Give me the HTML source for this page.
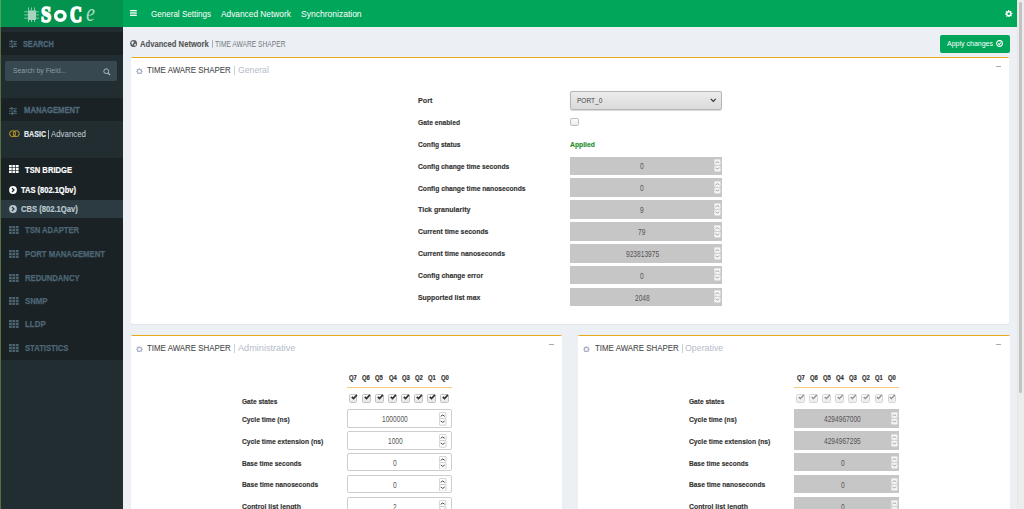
<!DOCTYPE html>
<html><head><meta charset="utf-8"><style>
html,body{margin:0;padding:0;width:1024px;height:509px;overflow:hidden;background:#ecf0f5;font-family:"Liberation Sans",sans-serif;}
body>div,body>span,body>svg{position:absolute;display:block;}
.t{white-space:nowrap;transform-origin:0 0;}
</style></head><body>
<div style="left:0.00px;top:0.00px;width:1024.00px;height:509.00px;background:#ecf0f5"></div>
<div style="left:0.00px;top:0.00px;width:123.00px;height:27.00px;background:#03934e"></div>
<div style="left:123.00px;top:0.00px;width:894.00px;height:27.00px;background:#00a65a"></div>
<div style="left:0.00px;top:27.00px;width:123.00px;height:482.00px;background:#222d32"></div>
<div style="left:0.00px;top:32.00px;width:123.00px;height:23.00px;background:#1a2226"></div>
<div style="left:0.00px;top:98.00px;width:123.00px;height:23.00px;background:#1a2226"></div>
<div style="left:0.00px;top:158.00px;width:123.00px;height:202.00px;background:#1a2226"></div>
<div style="left:0.00px;top:200.00px;width:123.00px;height:18.00px;background:#2c3b41"></div>
<div style="left:0.00px;top:0.00px;width:1.00px;height:27.00px;background:#4fa55e"></div>
<div style="left:0.00px;top:27.00px;width:1.00px;height:482.00px;background:#56703f"></div>
<div style="left:1017.00px;top:0.00px;width:7.00px;height:509.00px;background:#ececec;box-shadow:inset 0.5px 0 0 #e0e0e0"></div>
<div style="left:1019.30px;top:2.00px;width:3.00px;height:391.00px;background:#c3c3c3;border-radius:1.5px"></div>
<svg style="left:24px;top:6.5px" width="16" height="16" viewBox="0 0 16 16"><g fill="#a6d5bd"><rect x="3.9" y="3.4" width="8.1" height="9.6" /><rect x="4.1" y="0.4" width="0.8" height="3"/><rect x="7" y="0.4" width="0.8" height="3"/><rect x="10.2" y="0.4" width="0.8" height="3"/><rect x="4.1" y="13" width="0.8" height="2"/><rect x="7" y="13" width="0.8" height="2"/><rect x="10.2" y="13" width="0.8" height="2"/><rect x="0.2" y="4.4" width="3.7" height="0.8"/><rect x="0.2" y="7.5" width="3.7" height="0.8"/><rect x="0.2" y="10.7" width="3.7" height="0.8"/><rect x="12" y="4.4" width="2.9" height="0.8"/><rect x="12" y="7.5" width="2.9" height="0.8"/><rect x="12" y="10.7" width="2.9" height="0.8"/></g></svg>
<span class="t" style="left:40.75px;top:0.61px;font-family:'Liberation Serif',serif;font-size:22.5px;line-height:27px;color:#fff;-webkit-text-stroke:1.6px #fff;font-weight:700;transform:scaleX(0.816)">S</span>
<svg style="left:54px;top:10px" width="13" height="12" viewBox="0 0 13 12"><ellipse cx="6.35" cy="5.85" rx="4.7" ry="4.3" fill="none" stroke="#fff" stroke-width="3.5"/></svg>
<span class="t" style="left:70.38px;top:0.61px;font-family:'Liberation Serif',serif;font-size:22.5px;line-height:27px;color:#fff;-webkit-text-stroke:1.7px #fff;font-weight:700;transform:scaleX(0.737)">C</span>
<span class="t" style="left:86.00px;top:-2.57px;font-family:'Liberation Serif',serif;font-size:26px;line-height:31px;color:#a3dcc0;font-style:italic;transform:scaleX(0.778)">e</span>
<svg style="left:130.4px;top:10.3px" width="7" height="6" viewBox="0 0 7 6"><g fill="#fff"><rect x="0" y="0" width="6.8" height="1.3"/><rect x="0" y="2.3" width="6.8" height="1.3"/><rect x="0" y="4.6" width="6.8" height="1.3"/></g></svg>
<span class="t" style="left:150.50px;top:8.58px;font-size:8.72px;line-height:11px;font-weight:400;color:#fff;transform:scaleX(0.924);">General Settings</span>
<span class="t" style="left:220.60px;top:8.58px;font-size:8.72px;line-height:11px;font-weight:400;color:#fff;transform:scaleX(0.955);">Advanced Network</span>
<span class="t" style="left:300.60px;top:8.58px;font-size:8.72px;line-height:11px;font-weight:400;color:#fff;transform:scaleX(0.977);">Synchronization</span>
<svg style="left:1005px;top:9.5px" width="7.6" height="7.6" viewBox="0 0 7.6 7.6"><polygon points="7.53,3.06 7.60,3.80 6.48,4.33 6.33,4.85 6.96,5.91 6.49,6.49 5.32,6.07 4.85,6.33 4.54,7.53 3.80,7.60 3.27,6.48 2.75,6.33 1.69,6.96 1.11,6.49 1.53,5.32 1.27,4.85 0.07,4.54 0.00,3.80 1.12,3.27 1.27,2.75 0.64,1.69 1.11,1.11 2.28,1.53 2.75,1.27 3.06,0.07 3.80,0.00 4.33,1.12 4.85,1.27 5.91,0.64 6.49,1.11 6.07,2.28 6.33,2.75" fill="#fff"/><circle cx="3.8" cy="3.8" r="1.29" fill="#00a65a"/></svg>
<svg style="left:9px;top:40px" width="9" height="8" viewBox="0 0 9 8"><g fill="#4b646f"><rect x="0" y="1" width="8" height="0.9"/><rect x="0" y="3.6" width="8" height="0.9"/><rect x="0" y="6.1" width="8" height="0.9"/><rect x="1.8" y="0" width="1.6" height="2.9"/><rect x="5.1" y="2.6" width="1.6" height="2.9"/><rect x="2.6" y="5.1" width="1.6" height="2.9"/></g></svg>
<span class="t" style="left:23.30px;top:37.67px;font-size:9.59px;line-height:12px;font-weight:700;color:#50697a;transform:scaleX(0.763);-webkit-text-stroke:0.3px #50697a;">SEARCH</span>
<div style="left:5.00px;top:60.70px;width:112.00px;height:19.90px;background:#374850;border-radius:2px"></div>
<span class="t" style="left:12.90px;top:66.38px;font-size:7.85px;line-height:10px;font-weight:400;color:#8d9da5;transform:scaleX(0.871);">Search by Field...</span>
<svg style="left:102.5px;top:67.8px" width="8" height="8" viewBox="0 0 8 8"><circle cx="3.2" cy="3.2" r="2.4" fill="none" stroke="#b3c0c6" stroke-width="0.9"/><line x1="5" y1="5" x2="7.1" y2="7.1" stroke="#b3c0c6" stroke-width="1.1"/></svg>
<svg style="left:9px;top:106.5px" width="9" height="8" viewBox="0 0 9 8"><g fill="#4b646f"><rect x="0" y="1" width="8" height="0.9"/><rect x="0" y="3.6" width="8" height="0.9"/><rect x="0" y="6.1" width="8" height="0.9"/><rect x="1.8" y="0" width="1.6" height="2.9"/><rect x="5.1" y="2.6" width="1.6" height="2.9"/><rect x="2.6" y="5.1" width="1.6" height="2.9"/></g></svg>
<span class="t" style="left:23.90px;top:103.77px;font-size:9.30px;line-height:12px;font-weight:700;color:#50697a;transform:scaleX(0.824);-webkit-text-stroke:0.3px #50697a;">MANAGEMENT</span>
<svg style="left:9px;top:129.8px" width="11" height="7.5" viewBox="0 0 11 7.5"><g fill="none" stroke="#c9a125" stroke-width="1.0"><ellipse cx="3.6" cy="3.7" rx="3.0" ry="3.0"/><ellipse cx="7.3" cy="3.7" rx="3.0" ry="3.0"/></g></svg>
<span class="t" style="left:23.60px;top:126.82px;font-size:9.74px;line-height:13px;font-weight:700;color:#e6ecef;transform:scaleX(0.726);-webkit-text-stroke:0.2px #e6ecef;">BASIC</span>
<div style="left:47.90px;top:129.50px;width:0.70px;height:9.00px;background:#9fb0b8"></div>
<span class="t" style="left:51.00px;top:126.82px;font-size:9.74px;line-height:13px;font-weight:400;color:#c5d1d7;transform:scaleX(0.808);">Advanced</span>
<svg style="left:9.2px;top:164.8px" width="10.2" height="8.3" viewBox="0 0 10.2 8.3"><g fill="#fff"><rect x="0.00" y="0.00" width="2.75" height="2.25"/><rect x="3.45" y="0.00" width="2.75" height="2.25"/><rect x="6.90" y="0.00" width="2.75" height="2.25"/><rect x="0.00" y="2.85" width="2.75" height="2.25"/><rect x="3.45" y="2.85" width="2.75" height="2.25"/><rect x="6.90" y="2.85" width="2.75" height="2.25"/><rect x="0.00" y="5.70" width="2.75" height="2.25"/><rect x="3.45" y="5.70" width="2.75" height="2.25"/><rect x="6.90" y="5.70" width="2.75" height="2.25"/></g></svg>
<span class="t" style="left:24.80px;top:163.52px;font-size:9.45px;line-height:12px;font-weight:700;color:#fff;transform:scaleX(0.808);-webkit-text-stroke:0.2px #fff;">TSN BRIDGE</span>
<svg style="left:9.3px;top:186.3px" width="8" height="8" viewBox="0 0 8 8"><circle cx="4" cy="4" r="3.9" fill="#fff"/><polyline points="3,2 5,4 3,6" fill="none" stroke="#1a2226" stroke-width="1.2"/></svg>
<span class="t" style="left:21.00px;top:184.58px;font-size:8.43px;line-height:11px;font-weight:700;color:#fff;transform:scaleX(0.892);-webkit-text-stroke:0.2px #fff;">TAS (802.1Qbv)</span>
<svg style="left:9.3px;top:205.3px" width="8" height="8" viewBox="0 0 8 8"><circle cx="4" cy="4" r="3.9" fill="#b8c7ce"/><polyline points="3,2 5,4 3,6" fill="none" stroke="#2c3b41" stroke-width="1.2"/></svg>
<span class="t" style="left:20.60px;top:203.58px;font-size:8.43px;line-height:11px;font-weight:700;color:#b8c7ce;transform:scaleX(0.905);-webkit-text-stroke:0.2px #b8c7ce;">CBS (802.1Qav)</span>
<svg style="left:9.2px;top:225.9px" width="10.2" height="8.3" viewBox="0 0 10.2 8.3"><g fill="#4b646f"><rect x="0.00" y="0.00" width="2.75" height="2.25"/><rect x="3.45" y="0.00" width="2.75" height="2.25"/><rect x="6.90" y="0.00" width="2.75" height="2.25"/><rect x="0.00" y="2.85" width="2.75" height="2.25"/><rect x="3.45" y="2.85" width="2.75" height="2.25"/><rect x="6.90" y="2.85" width="2.75" height="2.25"/><rect x="0.00" y="5.70" width="2.75" height="2.25"/><rect x="3.45" y="5.70" width="2.75" height="2.25"/><rect x="6.90" y="5.70" width="2.75" height="2.25"/></g></svg>
<span class="t" style="left:24.80px;top:224.02px;font-size:9.45px;line-height:12px;font-weight:700;color:#4e6674;transform:scaleX(0.809);-webkit-text-stroke:0.25px #4e6674;">TSN ADAPTER</span>
<svg style="left:9.2px;top:249.9px" width="10.2" height="8.3" viewBox="0 0 10.2 8.3"><g fill="#4b646f"><rect x="0.00" y="0.00" width="2.75" height="2.25"/><rect x="3.45" y="0.00" width="2.75" height="2.25"/><rect x="6.90" y="0.00" width="2.75" height="2.25"/><rect x="0.00" y="2.85" width="2.75" height="2.25"/><rect x="3.45" y="2.85" width="2.75" height="2.25"/><rect x="6.90" y="2.85" width="2.75" height="2.25"/><rect x="0.00" y="5.70" width="2.75" height="2.25"/><rect x="3.45" y="5.70" width="2.75" height="2.25"/><rect x="6.90" y="5.70" width="2.75" height="2.25"/></g></svg>
<span class="t" style="left:24.80px;top:248.02px;font-size:9.45px;line-height:12px;font-weight:700;color:#4e6674;transform:scaleX(0.821);-webkit-text-stroke:0.25px #4e6674;">PORT MANAGEMENT</span>
<svg style="left:9.2px;top:273.5px" width="10.2" height="8.3" viewBox="0 0 10.2 8.3"><g fill="#4b646f"><rect x="0.00" y="0.00" width="2.75" height="2.25"/><rect x="3.45" y="0.00" width="2.75" height="2.25"/><rect x="6.90" y="0.00" width="2.75" height="2.25"/><rect x="0.00" y="2.85" width="2.75" height="2.25"/><rect x="3.45" y="2.85" width="2.75" height="2.25"/><rect x="6.90" y="2.85" width="2.75" height="2.25"/><rect x="0.00" y="5.70" width="2.75" height="2.25"/><rect x="3.45" y="5.70" width="2.75" height="2.25"/><rect x="6.90" y="5.70" width="2.75" height="2.25"/></g></svg>
<span class="t" style="left:24.80px;top:271.62px;font-size:9.45px;line-height:12px;font-weight:700;color:#4e6674;transform:scaleX(0.813);-webkit-text-stroke:0.25px #4e6674;">REDUNDANCY</span>
<svg style="left:9.2px;top:297.0px" width="10.2" height="8.3" viewBox="0 0 10.2 8.3"><g fill="#4b646f"><rect x="0.00" y="0.00" width="2.75" height="2.25"/><rect x="3.45" y="0.00" width="2.75" height="2.25"/><rect x="6.90" y="0.00" width="2.75" height="2.25"/><rect x="0.00" y="2.85" width="2.75" height="2.25"/><rect x="3.45" y="2.85" width="2.75" height="2.25"/><rect x="6.90" y="2.85" width="2.75" height="2.25"/><rect x="0.00" y="5.70" width="2.75" height="2.25"/><rect x="3.45" y="5.70" width="2.75" height="2.25"/><rect x="6.90" y="5.70" width="2.75" height="2.25"/></g></svg>
<span class="t" style="left:24.80px;top:295.12px;font-size:9.45px;line-height:12px;font-weight:700;color:#4e6674;transform:scaleX(0.828);-webkit-text-stroke:0.25px #4e6674;">SNMP</span>
<svg style="left:9.2px;top:320.3px" width="10.2" height="8.3" viewBox="0 0 10.2 8.3"><g fill="#4b646f"><rect x="0.00" y="0.00" width="2.75" height="2.25"/><rect x="3.45" y="0.00" width="2.75" height="2.25"/><rect x="6.90" y="0.00" width="2.75" height="2.25"/><rect x="0.00" y="2.85" width="2.75" height="2.25"/><rect x="3.45" y="2.85" width="2.75" height="2.25"/><rect x="6.90" y="2.85" width="2.75" height="2.25"/><rect x="0.00" y="5.70" width="2.75" height="2.25"/><rect x="3.45" y="5.70" width="2.75" height="2.25"/><rect x="6.90" y="5.70" width="2.75" height="2.25"/></g></svg>
<span class="t" style="left:24.80px;top:318.42px;font-size:9.45px;line-height:12px;font-weight:700;color:#4e6674;transform:scaleX(0.839);-webkit-text-stroke:0.25px #4e6674;">LLDP</span>
<svg style="left:9.2px;top:343.8px" width="10.2" height="8.3" viewBox="0 0 10.2 8.3"><g fill="#4b646f"><rect x="0.00" y="0.00" width="2.75" height="2.25"/><rect x="3.45" y="0.00" width="2.75" height="2.25"/><rect x="6.90" y="0.00" width="2.75" height="2.25"/><rect x="0.00" y="2.85" width="2.75" height="2.25"/><rect x="3.45" y="2.85" width="2.75" height="2.25"/><rect x="6.90" y="2.85" width="2.75" height="2.25"/><rect x="0.00" y="5.70" width="2.75" height="2.25"/><rect x="3.45" y="5.70" width="2.75" height="2.25"/><rect x="6.90" y="5.70" width="2.75" height="2.25"/></g></svg>
<span class="t" style="left:24.80px;top:341.92px;font-size:9.45px;line-height:12px;font-weight:700;color:#4e6674;transform:scaleX(0.810);-webkit-text-stroke:0.25px #4e6674;">STATISTICS</span>
<svg style="left:130px;top:40px" width="7.2" height="7.2" viewBox="0 0 8 8"><circle cx="4" cy="4" r="3.9" fill="#5b5e62"/><path d="M2.2 1.6 Q3.6 1.3 4.6 2.2 Q4.4 3.4 3.4 3.6 Q3.8 4.6 3.2 5.4 Q2.2 4.8 1.6 3.6 Q1.2 2.4 2.2 1.6 Z M5.2 4.2 Q6.6 4 6.9 5 Q6.2 6.6 4.8 6.9 Q4.8 5.4 5.2 4.2 Z" fill="#e8ecf0"/></svg>
<span class="t" style="left:140.00px;top:38.88px;font-size:8.72px;line-height:11px;font-weight:700;color:#555;transform:scaleX(0.876);-webkit-text-stroke:0.1px #555;">Advanced Network</span>
<div style="left:212.00px;top:39.70px;width:0.70px;height:8.30px;background:#aab0b8"></div>
<span class="t" style="left:215.40px;top:38.28px;font-size:9.01px;line-height:12px;font-weight:400;color:#747a80;transform:scaleX(0.739);">TIME AWARE SHAPER</span>
<div style="left:939.70px;top:34.60px;width:70.00px;height:18.10px;background:#00a65a;border-radius:2px"></div>
<span class="t" style="left:946.80px;top:38.98px;font-size:7.27px;line-height:9px;font-weight:400;color:#fff;transform:scaleX(0.965);">Apply changes</span>
<svg style="left:996px;top:40px" width="7" height="7" viewBox="0 0 8 8"><circle cx="4" cy="4" r="3.3" fill="none" stroke="#fff" stroke-width="1.2"/><polyline points="2.4,4.0 3.6,5.2 5.7,2.9" fill="none" stroke="#fff" stroke-width="1.25"/></svg>
<div style="left:130.70px;top:56.50px;width:878.80px;height:267.40px;background:#fff;border-top:1.7px solid #e8a916;border-radius:1.5px;box-shadow:0 0.6px 0.6px rgba(0,0,0,0.1);box-sizing:border-box"></div>
<svg style="left:136.1px;top:67.5px" width="6.8" height="6.8" viewBox="0 0 6.8 6.8"><polygon points="6.73,2.74 6.80,3.40 5.80,3.88 5.66,4.34 6.23,5.29 5.80,5.80 4.76,5.44 4.34,5.66 4.06,6.73 3.40,6.80 2.92,5.80 2.46,5.66 1.51,6.23 1.00,5.80 1.36,4.76 1.14,4.34 0.07,4.06 0.00,3.40 1.00,2.92 1.14,2.46 0.57,1.51 1.00,1.00 2.04,1.36 2.46,1.14 2.74,0.07 3.40,0.00 3.88,1.00 4.34,1.14 5.29,0.57 5.80,1.00 5.44,2.04 5.66,2.46" fill="#a4aec2"/><circle cx="3.4" cy="3.4" r="1.43" fill="#fff"/></svg>
<span class="t" style="left:147.20px;top:64.07px;font-size:9.59px;line-height:12px;font-weight:400;color:#4a4a4a;transform:scaleX(0.826);-webkit-text-stroke:0.1px #4a4a4a;">TIME AWARE SHAPER</span>
<div style="left:234.40px;top:66.00px;width:0.80px;height:9.00px;background:#c9d0d8"></div>
<span class="t" style="left:238.00px;top:64.07px;font-size:9.59px;line-height:12px;font-weight:400;color:#b4bcc8;transform:scaleX(0.905);">General</span>
<div style="left:996.00px;top:65.90px;width:5.30px;height:1.00px;background:#a2abb8"></div>
<div style="left:130.70px;top:334.50px;width:431.50px;height:265.50px;background:#fff;border-top:1.7px solid #e8a916;border-radius:1.5px;box-shadow:0 0.6px 0.6px rgba(0,0,0,0.1);box-sizing:border-box"></div>
<svg style="left:136.1px;top:345.5px" width="6.8" height="6.8" viewBox="0 0 6.8 6.8"><polygon points="6.73,2.74 6.80,3.40 5.80,3.88 5.66,4.34 6.23,5.29 5.80,5.80 4.76,5.44 4.34,5.66 4.06,6.73 3.40,6.80 2.92,5.80 2.46,5.66 1.51,6.23 1.00,5.80 1.36,4.76 1.14,4.34 0.07,4.06 0.00,3.40 1.00,2.92 1.14,2.46 0.57,1.51 1.00,1.00 2.04,1.36 2.46,1.14 2.74,0.07 3.40,0.00 3.88,1.00 4.34,1.14 5.29,0.57 5.80,1.00 5.44,2.04 5.66,2.46" fill="#a4aec2"/><circle cx="3.4" cy="3.4" r="1.43" fill="#fff"/></svg>
<span class="t" style="left:147.20px;top:342.07px;font-size:9.59px;line-height:12px;font-weight:400;color:#4a4a4a;transform:scaleX(0.826);-webkit-text-stroke:0.1px #4a4a4a;">TIME AWARE SHAPER</span>
<div style="left:234.40px;top:344.00px;width:0.80px;height:9.00px;background:#c9d0d8"></div>
<span class="t" style="left:238.00px;top:342.07px;font-size:9.59px;line-height:12px;font-weight:400;color:#b4bcc8;transform:scaleX(0.955);">Administrative</span>
<div style="left:548.70px;top:343.90px;width:5.30px;height:1.00px;background:#a2abb8"></div>
<div style="left:578.00px;top:334.50px;width:431.50px;height:265.50px;background:#fff;border-top:1.7px solid #e8a916;border-radius:1.5px;box-shadow:0 0.6px 0.6px rgba(0,0,0,0.1);box-sizing:border-box"></div>
<svg style="left:583.4px;top:345.5px" width="6.8" height="6.8" viewBox="0 0 6.8 6.8"><polygon points="6.73,2.74 6.80,3.40 5.80,3.88 5.66,4.34 6.23,5.29 5.80,5.80 4.76,5.44 4.34,5.66 4.06,6.73 3.40,6.80 2.92,5.80 2.46,5.66 1.51,6.23 1.00,5.80 1.36,4.76 1.14,4.34 0.07,4.06 0.00,3.40 1.00,2.92 1.14,2.46 0.57,1.51 1.00,1.00 2.04,1.36 2.46,1.14 2.74,0.07 3.40,0.00 3.88,1.00 4.34,1.14 5.29,0.57 5.80,1.00 5.44,2.04 5.66,2.46" fill="#a4aec2"/><circle cx="3.4" cy="3.4" r="1.43" fill="#fff"/></svg>
<span class="t" style="left:594.50px;top:342.07px;font-size:9.59px;line-height:12px;font-weight:400;color:#4a4a4a;transform:scaleX(0.826);-webkit-text-stroke:0.1px #4a4a4a;">TIME AWARE SHAPER</span>
<div style="left:681.70px;top:344.00px;width:0.80px;height:9.00px;background:#c9d0d8"></div>
<span class="t" style="left:685.30px;top:342.07px;font-size:9.59px;line-height:12px;font-weight:400;color:#b4bcc8;transform:scaleX(0.921);">Operative</span>
<div style="left:996.00px;top:343.90px;width:5.30px;height:1.00px;background:#a2abb8"></div>
<span class="t" style="left:418.30px;top:96.48px;font-size:7.85px;line-height:10px;font-weight:700;color:#333;transform:scaleX(0.911);-webkit-text-stroke:0.15px #333;">Port</span>
<span class="t" style="left:418.30px;top:118.28px;font-size:7.85px;line-height:10px;font-weight:700;color:#333;transform:scaleX(0.852);-webkit-text-stroke:0.15px #333;">Gate enabled</span>
<span class="t" style="left:418.30px;top:140.08px;font-size:7.85px;line-height:10px;font-weight:700;color:#333;transform:scaleX(0.848);-webkit-text-stroke:0.15px #333;">Config status</span>
<span class="t" style="left:418.30px;top:161.88px;font-size:7.85px;line-height:10px;font-weight:700;color:#333;transform:scaleX(0.855);-webkit-text-stroke:0.15px #333;">Config change time seconds</span>
<span class="t" style="left:418.30px;top:183.68px;font-size:7.85px;line-height:10px;font-weight:700;color:#333;transform:scaleX(0.857);-webkit-text-stroke:0.15px #333;">Config change time nanoseconds</span>
<span class="t" style="left:418.30px;top:205.48px;font-size:7.85px;line-height:10px;font-weight:700;color:#333;transform:scaleX(0.900);-webkit-text-stroke:0.15px #333;">Tick granularity</span>
<span class="t" style="left:418.30px;top:227.28px;font-size:7.85px;line-height:10px;font-weight:700;color:#333;transform:scaleX(0.873);-webkit-text-stroke:0.15px #333;">Current time seconds</span>
<span class="t" style="left:418.30px;top:249.08px;font-size:7.85px;line-height:10px;font-weight:700;color:#333;transform:scaleX(0.875);-webkit-text-stroke:0.15px #333;">Current time nanoseconds</span>
<span class="t" style="left:418.30px;top:270.88px;font-size:7.85px;line-height:10px;font-weight:700;color:#333;transform:scaleX(0.868);-webkit-text-stroke:0.15px #333;">Config change error</span>
<span class="t" style="left:418.30px;top:292.68px;font-size:7.85px;line-height:10px;font-weight:700;color:#333;transform:scaleX(0.883);-webkit-text-stroke:0.15px #333;">Supported list max</span>
<div style="left:570.30px;top:91.10px;width:151.70px;height:18.50px;background:linear-gradient(#ececec,#dadada);border:0.7px solid #b5b5b5;border-radius:2px;box-sizing:border-box;box-shadow:0 0.6px 0.8px rgba(0,0,0,0.15)"></div>
<span class="t" style="left:577.10px;top:95.98px;font-size:7.85px;line-height:10px;font-weight:400;color:#444;transform:scaleX(0.833);">PORT_0</span>
<svg style="left:710px;top:98px" width="6.5" height="4.5" viewBox="0 0 6.5 4.5"><polyline points="0.8,0.8 3.25,3.3 5.7,0.8" fill="none" stroke="#333" stroke-width="1.2"/></svg>
<div style="left:570.30px;top:117.90px;width:8.50px;height:8.30px;background:linear-gradient(#fbfbfb,#ebebeb);border:0.8px solid #bdbdbd;border-radius:1.8px;box-sizing:border-box"></div>
<span class="t" style="left:570.30px;top:139.63px;font-size:7.70px;line-height:10px;font-weight:700;color:#23902a;transform:scaleX(0.882);-webkit-text-stroke:0.15px #23902a;">Applied</span>
<div style="left:570.30px;top:156.60px;width:151.70px;height:18.50px;background:#c6c6c6"></div>
<span class="t" style="left:640.31px;top:161.43px;font-size:8.43px;line-height:11px;font-weight:400;color:#555;transform:scaleX(0.785);">0</span>
<svg style="left:713.7px;top:159.2px" width="7" height="13" viewBox="0 0 7 13"><rect x="0.3" y="0.3" width="6.2" height="5.6" rx="0.8" fill="#f6f6f6" stroke="#d8d8d8" stroke-width="0.5"/><rect x="0.3" y="6.8" width="6.2" height="5.6" rx="0.8" fill="#f6f6f6" stroke="#d8d8d8" stroke-width="0.5"/><polyline points="1.5,3.9 3.4,2.7 5.3,3.9" fill="none" stroke="#9a9a9a" stroke-width="0.9"/><polyline points="1.5,8.8 3.4,10.0 5.3,8.8" fill="none" stroke="#9a9a9a" stroke-width="0.9"/></svg>
<div style="left:570.30px;top:178.45px;width:151.70px;height:18.50px;background:#c6c6c6"></div>
<span class="t" style="left:640.31px;top:183.28px;font-size:8.43px;line-height:11px;font-weight:400;color:#555;transform:scaleX(0.785);">0</span>
<svg style="left:713.7px;top:181.04999999999998px" width="7" height="13" viewBox="0 0 7 13"><rect x="0.3" y="0.3" width="6.2" height="5.6" rx="0.8" fill="#f6f6f6" stroke="#d8d8d8" stroke-width="0.5"/><rect x="0.3" y="6.8" width="6.2" height="5.6" rx="0.8" fill="#f6f6f6" stroke="#d8d8d8" stroke-width="0.5"/><polyline points="1.5,3.9 3.4,2.7 5.3,3.9" fill="none" stroke="#9a9a9a" stroke-width="0.9"/><polyline points="1.5,8.8 3.4,10.0 5.3,8.8" fill="none" stroke="#9a9a9a" stroke-width="0.9"/></svg>
<div style="left:570.30px;top:200.30px;width:151.70px;height:18.50px;background:#c6c6c6"></div>
<span class="t" style="left:640.31px;top:205.13px;font-size:8.43px;line-height:11px;font-weight:400;color:#555;transform:scaleX(0.785);">9</span>
<svg style="left:713.7px;top:202.9px" width="7" height="13" viewBox="0 0 7 13"><rect x="0.3" y="0.3" width="6.2" height="5.6" rx="0.8" fill="#f6f6f6" stroke="#d8d8d8" stroke-width="0.5"/><rect x="0.3" y="6.8" width="6.2" height="5.6" rx="0.8" fill="#f6f6f6" stroke="#d8d8d8" stroke-width="0.5"/><polyline points="1.5,3.9 3.4,2.7 5.3,3.9" fill="none" stroke="#9a9a9a" stroke-width="0.9"/><polyline points="1.5,8.8 3.4,10.0 5.3,8.8" fill="none" stroke="#9a9a9a" stroke-width="0.9"/></svg>
<div style="left:570.30px;top:222.15px;width:151.70px;height:18.50px;background:#c6c6c6"></div>
<span class="t" style="left:638.47px;top:226.98px;font-size:8.43px;line-height:11px;font-weight:400;color:#555;transform:scaleX(0.785);">79</span>
<svg style="left:713.7px;top:224.75px" width="7" height="13" viewBox="0 0 7 13"><rect x="0.3" y="0.3" width="6.2" height="5.6" rx="0.8" fill="#f6f6f6" stroke="#d8d8d8" stroke-width="0.5"/><rect x="0.3" y="6.8" width="6.2" height="5.6" rx="0.8" fill="#f6f6f6" stroke="#d8d8d8" stroke-width="0.5"/><polyline points="1.5,3.9 3.4,2.7 5.3,3.9" fill="none" stroke="#9a9a9a" stroke-width="0.9"/><polyline points="1.5,8.8 3.4,10.0 5.3,8.8" fill="none" stroke="#9a9a9a" stroke-width="0.9"/></svg>
<div style="left:570.30px;top:244.00px;width:151.70px;height:18.50px;background:#c6c6c6"></div>
<span class="t" style="left:625.59px;top:248.83px;font-size:8.43px;line-height:11px;font-weight:400;color:#555;transform:scaleX(0.785);">923813975</span>
<svg style="left:713.7px;top:246.6px" width="7" height="13" viewBox="0 0 7 13"><rect x="0.3" y="0.3" width="6.2" height="5.6" rx="0.8" fill="#f6f6f6" stroke="#d8d8d8" stroke-width="0.5"/><rect x="0.3" y="6.8" width="6.2" height="5.6" rx="0.8" fill="#f6f6f6" stroke="#d8d8d8" stroke-width="0.5"/><polyline points="1.5,3.9 3.4,2.7 5.3,3.9" fill="none" stroke="#9a9a9a" stroke-width="0.9"/><polyline points="1.5,8.8 3.4,10.0 5.3,8.8" fill="none" stroke="#9a9a9a" stroke-width="0.9"/></svg>
<div style="left:570.30px;top:265.85px;width:151.70px;height:18.50px;background:#c6c6c6"></div>
<span class="t" style="left:640.31px;top:270.68px;font-size:8.43px;line-height:11px;font-weight:400;color:#555;transform:scaleX(0.785);">0</span>
<svg style="left:713.7px;top:268.45000000000005px" width="7" height="13" viewBox="0 0 7 13"><rect x="0.3" y="0.3" width="6.2" height="5.6" rx="0.8" fill="#f6f6f6" stroke="#d8d8d8" stroke-width="0.5"/><rect x="0.3" y="6.8" width="6.2" height="5.6" rx="0.8" fill="#f6f6f6" stroke="#d8d8d8" stroke-width="0.5"/><polyline points="1.5,3.9 3.4,2.7 5.3,3.9" fill="none" stroke="#9a9a9a" stroke-width="0.9"/><polyline points="1.5,8.8 3.4,10.0 5.3,8.8" fill="none" stroke="#9a9a9a" stroke-width="0.9"/></svg>
<div style="left:570.30px;top:287.70px;width:151.70px;height:18.50px;background:#c6c6c6"></div>
<span class="t" style="left:634.79px;top:292.53px;font-size:8.43px;line-height:11px;font-weight:400;color:#555;transform:scaleX(0.785);">2048</span>
<svg style="left:713.7px;top:290.30000000000007px" width="7" height="13" viewBox="0 0 7 13"><rect x="0.3" y="0.3" width="6.2" height="5.6" rx="0.8" fill="#f6f6f6" stroke="#d8d8d8" stroke-width="0.5"/><rect x="0.3" y="6.8" width="6.2" height="5.6" rx="0.8" fill="#f6f6f6" stroke="#d8d8d8" stroke-width="0.5"/><polyline points="1.5,3.9 3.4,2.7 5.3,3.9" fill="none" stroke="#9a9a9a" stroke-width="0.9"/><polyline points="1.5,8.8 3.4,10.0 5.3,8.8" fill="none" stroke="#9a9a9a" stroke-width="0.9"/></svg>
<span class="t" style="left:349.20px;top:373.33px;font-size:7.41px;line-height:10px;font-weight:700;color:#333;transform:scaleX(0.799);-webkit-text-stroke:0.2px #333;">Q7</span>
<span class="t" style="left:362.30px;top:373.33px;font-size:7.41px;line-height:10px;font-weight:700;color:#333;transform:scaleX(0.799);-webkit-text-stroke:0.2px #333;">Q6</span>
<span class="t" style="left:375.40px;top:373.33px;font-size:7.41px;line-height:10px;font-weight:700;color:#333;transform:scaleX(0.799);-webkit-text-stroke:0.2px #333;">Q5</span>
<span class="t" style="left:388.50px;top:373.33px;font-size:7.41px;line-height:10px;font-weight:700;color:#333;transform:scaleX(0.799);-webkit-text-stroke:0.2px #333;">Q4</span>
<span class="t" style="left:401.60px;top:373.33px;font-size:7.41px;line-height:10px;font-weight:700;color:#333;transform:scaleX(0.799);-webkit-text-stroke:0.2px #333;">Q3</span>
<span class="t" style="left:414.70px;top:373.33px;font-size:7.41px;line-height:10px;font-weight:700;color:#333;transform:scaleX(0.799);-webkit-text-stroke:0.2px #333;">Q2</span>
<span class="t" style="left:427.80px;top:373.33px;font-size:7.41px;line-height:10px;font-weight:700;color:#333;transform:scaleX(0.799);-webkit-text-stroke:0.2px #333;">Q1</span>
<span class="t" style="left:440.90px;top:373.33px;font-size:7.41px;line-height:10px;font-weight:700;color:#333;transform:scaleX(0.799);-webkit-text-stroke:0.2px #333;">Q0</span>
<div style="left:346.70px;top:386.80px;width:105.10px;height:1.00px;background:#f2cc7a"></div>
<div style="left:348.80px;top:394.00px;width:8.70px;height:9.00px;background:linear-gradient(#fafafa,#e6e6e6);border:0.8px solid #c2c2c2;border-radius:1.6px;box-sizing:border-box"></div>
<svg style="left:350.60px;top:394.4px" width="7" height="6" viewBox="0 0 7 6"><polyline points="0.8,2.9 2.5,4.6 5.9,0.9" fill="none" stroke="#2a2f33" stroke-width="1.6"/></svg>
<div style="left:361.87px;top:394.00px;width:8.70px;height:9.00px;background:linear-gradient(#fafafa,#e6e6e6);border:0.8px solid #c2c2c2;border-radius:1.6px;box-sizing:border-box"></div>
<svg style="left:363.67px;top:394.4px" width="7" height="6" viewBox="0 0 7 6"><polyline points="0.8,2.9 2.5,4.6 5.9,0.9" fill="none" stroke="#2a2f33" stroke-width="1.6"/></svg>
<div style="left:374.94px;top:394.00px;width:8.70px;height:9.00px;background:linear-gradient(#fafafa,#e6e6e6);border:0.8px solid #c2c2c2;border-radius:1.6px;box-sizing:border-box"></div>
<svg style="left:376.74px;top:394.4px" width="7" height="6" viewBox="0 0 7 6"><polyline points="0.8,2.9 2.5,4.6 5.9,0.9" fill="none" stroke="#2a2f33" stroke-width="1.6"/></svg>
<div style="left:388.01px;top:394.00px;width:8.70px;height:9.00px;background:linear-gradient(#fafafa,#e6e6e6);border:0.8px solid #c2c2c2;border-radius:1.6px;box-sizing:border-box"></div>
<svg style="left:389.81px;top:394.4px" width="7" height="6" viewBox="0 0 7 6"><polyline points="0.8,2.9 2.5,4.6 5.9,0.9" fill="none" stroke="#2a2f33" stroke-width="1.6"/></svg>
<div style="left:401.08px;top:394.00px;width:8.70px;height:9.00px;background:linear-gradient(#fafafa,#e6e6e6);border:0.8px solid #c2c2c2;border-radius:1.6px;box-sizing:border-box"></div>
<svg style="left:402.88px;top:394.4px" width="7" height="6" viewBox="0 0 7 6"><polyline points="0.8,2.9 2.5,4.6 5.9,0.9" fill="none" stroke="#2a2f33" stroke-width="1.6"/></svg>
<div style="left:414.15px;top:394.00px;width:8.70px;height:9.00px;background:linear-gradient(#fafafa,#e6e6e6);border:0.8px solid #c2c2c2;border-radius:1.6px;box-sizing:border-box"></div>
<svg style="left:415.95px;top:394.4px" width="7" height="6" viewBox="0 0 7 6"><polyline points="0.8,2.9 2.5,4.6 5.9,0.9" fill="none" stroke="#2a2f33" stroke-width="1.6"/></svg>
<div style="left:427.22px;top:394.00px;width:8.70px;height:9.00px;background:linear-gradient(#fafafa,#e6e6e6);border:0.8px solid #c2c2c2;border-radius:1.6px;box-sizing:border-box"></div>
<svg style="left:429.02px;top:394.4px" width="7" height="6" viewBox="0 0 7 6"><polyline points="0.8,2.9 2.5,4.6 5.9,0.9" fill="none" stroke="#2a2f33" stroke-width="1.6"/></svg>
<div style="left:440.29px;top:394.00px;width:8.70px;height:9.00px;background:linear-gradient(#fafafa,#e6e6e6);border:0.8px solid #c2c2c2;border-radius:1.6px;box-sizing:border-box"></div>
<svg style="left:442.09px;top:394.4px" width="7" height="6" viewBox="0 0 7 6"><polyline points="0.8,2.9 2.5,4.6 5.9,0.9" fill="none" stroke="#2a2f33" stroke-width="1.6"/></svg>
<span class="t" style="left:241.50px;top:396.78px;font-size:7.85px;line-height:10px;font-weight:700;color:#333;transform:scaleX(0.837);-webkit-text-stroke:0.15px #333;">Gate states</span>
<span class="t" style="left:241.50px;top:414.78px;font-size:7.85px;line-height:10px;font-weight:700;color:#333;transform:scaleX(0.854);-webkit-text-stroke:0.15px #333;">Cycle time (ns)</span>
<span class="t" style="left:241.50px;top:436.68px;font-size:7.85px;line-height:10px;font-weight:700;color:#333;transform:scaleX(0.860);-webkit-text-stroke:0.15px #333;">Cycle time extension (ns)</span>
<span class="t" style="left:241.50px;top:458.58px;font-size:7.85px;line-height:10px;font-weight:700;color:#333;transform:scaleX(0.834);-webkit-text-stroke:0.15px #333;">Base time seconds</span>
<span class="t" style="left:241.50px;top:480.48px;font-size:7.85px;line-height:10px;font-weight:700;color:#333;transform:scaleX(0.848);-webkit-text-stroke:0.15px #333;">Base time nanoseconds</span>
<span class="t" style="left:241.50px;top:502.38px;font-size:7.85px;line-height:10px;font-weight:700;color:#333;transform:scaleX(0.877);-webkit-text-stroke:0.15px #333;">Control list length</span>
<div style="left:346.80px;top:409.30px;width:105.00px;height:18.30px;background:#fff;border:0.8px solid #cdcdcd;border-radius:2px;box-sizing:border-box"></div>
<span class="t" style="left:382.42px;top:414.03px;font-size:8.43px;line-height:11px;font-weight:400;color:#555;transform:scaleX(0.785);">1000000</span>
<svg style="left:439.40000000000003px;top:412.0px" width="7.4" height="13.6" viewBox="0 0 7.4 13.6"><rect x="0.4" y="0.4" width="6.6" height="6.2" rx="1" fill="#fff" stroke="#bdbdbd" stroke-width="0.7"/><rect x="0.4" y="6.6" width="6.6" height="6.6" rx="1" fill="#fff" stroke="#bdbdbd" stroke-width="0.7"/><polyline points="1.7,4.3 3.7,3.0 5.7,4.3" fill="none" stroke="#444" stroke-width="1.0"/><polyline points="1.7,9.0 3.7,10.4 5.7,9.0" fill="none" stroke="#444" stroke-width="1.0"/></svg>
<div style="left:346.80px;top:431.25px;width:105.00px;height:18.30px;background:#fff;border:0.8px solid #cdcdcd;border-radius:2px;box-sizing:border-box"></div>
<span class="t" style="left:387.94px;top:435.98px;font-size:8.43px;line-height:11px;font-weight:400;color:#555;transform:scaleX(0.785);">1000</span>
<svg style="left:439.40000000000003px;top:433.95px" width="7.4" height="13.6" viewBox="0 0 7.4 13.6"><rect x="0.4" y="0.4" width="6.6" height="6.2" rx="1" fill="#fff" stroke="#bdbdbd" stroke-width="0.7"/><rect x="0.4" y="6.6" width="6.6" height="6.6" rx="1" fill="#fff" stroke="#bdbdbd" stroke-width="0.7"/><polyline points="1.7,4.3 3.7,3.0 5.7,4.3" fill="none" stroke="#444" stroke-width="1.0"/><polyline points="1.7,9.0 3.7,10.4 5.7,9.0" fill="none" stroke="#444" stroke-width="1.0"/></svg>
<div style="left:346.80px;top:453.20px;width:105.00px;height:18.30px;background:#fff;border:0.8px solid #cdcdcd;border-radius:2px;box-sizing:border-box"></div>
<span class="t" style="left:393.46px;top:457.93px;font-size:8.43px;line-height:11px;font-weight:400;color:#555;transform:scaleX(0.785);">0</span>
<svg style="left:439.40000000000003px;top:455.9px" width="7.4" height="13.6" viewBox="0 0 7.4 13.6"><rect x="0.4" y="0.4" width="6.6" height="6.2" rx="1" fill="#fff" stroke="#bdbdbd" stroke-width="0.7"/><rect x="0.4" y="6.6" width="6.6" height="6.6" rx="1" fill="#fff" stroke="#bdbdbd" stroke-width="0.7"/><polyline points="1.7,4.3 3.7,3.0 5.7,4.3" fill="none" stroke="#444" stroke-width="1.0"/><polyline points="1.7,9.0 3.7,10.4 5.7,9.0" fill="none" stroke="#444" stroke-width="1.0"/></svg>
<div style="left:346.80px;top:475.15px;width:105.00px;height:18.30px;background:#fff;border:0.8px solid #cdcdcd;border-radius:2px;box-sizing:border-box"></div>
<span class="t" style="left:393.46px;top:479.88px;font-size:8.43px;line-height:11px;font-weight:400;color:#555;transform:scaleX(0.785);">0</span>
<svg style="left:439.40000000000003px;top:477.84999999999997px" width="7.4" height="13.6" viewBox="0 0 7.4 13.6"><rect x="0.4" y="0.4" width="6.6" height="6.2" rx="1" fill="#fff" stroke="#bdbdbd" stroke-width="0.7"/><rect x="0.4" y="6.6" width="6.6" height="6.6" rx="1" fill="#fff" stroke="#bdbdbd" stroke-width="0.7"/><polyline points="1.7,4.3 3.7,3.0 5.7,4.3" fill="none" stroke="#444" stroke-width="1.0"/><polyline points="1.7,9.0 3.7,10.4 5.7,9.0" fill="none" stroke="#444" stroke-width="1.0"/></svg>
<div style="left:346.80px;top:497.10px;width:105.00px;height:18.30px;background:#fff;border:0.8px solid #cdcdcd;border-radius:2px;box-sizing:border-box"></div>
<span class="t" style="left:393.46px;top:501.83px;font-size:8.43px;line-height:11px;font-weight:400;color:#555;transform:scaleX(0.785);">2</span>
<svg style="left:439.40000000000003px;top:499.8px" width="7.4" height="13.6" viewBox="0 0 7.4 13.6"><rect x="0.4" y="0.4" width="6.6" height="6.2" rx="1" fill="#fff" stroke="#bdbdbd" stroke-width="0.7"/><rect x="0.4" y="6.6" width="6.6" height="6.6" rx="1" fill="#fff" stroke="#bdbdbd" stroke-width="0.7"/><polyline points="1.7,4.3 3.7,3.0 5.7,4.3" fill="none" stroke="#444" stroke-width="1.0"/><polyline points="1.7,9.0 3.7,10.4 5.7,9.0" fill="none" stroke="#444" stroke-width="1.0"/></svg>
<span class="t" style="left:796.50px;top:373.33px;font-size:7.41px;line-height:10px;font-weight:700;color:#333;transform:scaleX(0.799);-webkit-text-stroke:0.2px #333;">Q7</span>
<span class="t" style="left:809.60px;top:373.33px;font-size:7.41px;line-height:10px;font-weight:700;color:#333;transform:scaleX(0.799);-webkit-text-stroke:0.2px #333;">Q6</span>
<span class="t" style="left:822.70px;top:373.33px;font-size:7.41px;line-height:10px;font-weight:700;color:#333;transform:scaleX(0.799);-webkit-text-stroke:0.2px #333;">Q5</span>
<span class="t" style="left:835.80px;top:373.33px;font-size:7.41px;line-height:10px;font-weight:700;color:#333;transform:scaleX(0.799);-webkit-text-stroke:0.2px #333;">Q4</span>
<span class="t" style="left:848.90px;top:373.33px;font-size:7.41px;line-height:10px;font-weight:700;color:#333;transform:scaleX(0.799);-webkit-text-stroke:0.2px #333;">Q3</span>
<span class="t" style="left:862.00px;top:373.33px;font-size:7.41px;line-height:10px;font-weight:700;color:#333;transform:scaleX(0.799);-webkit-text-stroke:0.2px #333;">Q2</span>
<span class="t" style="left:875.10px;top:373.33px;font-size:7.41px;line-height:10px;font-weight:700;color:#333;transform:scaleX(0.799);-webkit-text-stroke:0.2px #333;">Q1</span>
<span class="t" style="left:888.20px;top:373.33px;font-size:7.41px;line-height:10px;font-weight:700;color:#333;transform:scaleX(0.799);-webkit-text-stroke:0.2px #333;">Q0</span>
<div style="left:794.00px;top:386.80px;width:105.10px;height:1.00px;background:#f2cc7a"></div>
<div style="left:796.10px;top:394.00px;width:8.70px;height:9.00px;background:linear-gradient(#fafafa,#ececec);border:0.8px solid #d6d6d6;border-radius:1.6px;box-sizing:border-box"></div>
<svg style="left:797.90px;top:394.4px" width="7" height="6" viewBox="0 0 7 6"><polyline points="0.7,3.0 2.4,4.6 5.8,1.0" fill="none" stroke="#8c8c8c" stroke-width="1.3"/></svg>
<div style="left:809.17px;top:394.00px;width:8.70px;height:9.00px;background:linear-gradient(#fafafa,#ececec);border:0.8px solid #d6d6d6;border-radius:1.6px;box-sizing:border-box"></div>
<svg style="left:810.97px;top:394.4px" width="7" height="6" viewBox="0 0 7 6"><polyline points="0.7,3.0 2.4,4.6 5.8,1.0" fill="none" stroke="#8c8c8c" stroke-width="1.3"/></svg>
<div style="left:822.24px;top:394.00px;width:8.70px;height:9.00px;background:linear-gradient(#fafafa,#ececec);border:0.8px solid #d6d6d6;border-radius:1.6px;box-sizing:border-box"></div>
<svg style="left:824.04px;top:394.4px" width="7" height="6" viewBox="0 0 7 6"><polyline points="0.7,3.0 2.4,4.6 5.8,1.0" fill="none" stroke="#8c8c8c" stroke-width="1.3"/></svg>
<div style="left:835.31px;top:394.00px;width:8.70px;height:9.00px;background:linear-gradient(#fafafa,#ececec);border:0.8px solid #d6d6d6;border-radius:1.6px;box-sizing:border-box"></div>
<svg style="left:837.11px;top:394.4px" width="7" height="6" viewBox="0 0 7 6"><polyline points="0.7,3.0 2.4,4.6 5.8,1.0" fill="none" stroke="#8c8c8c" stroke-width="1.3"/></svg>
<div style="left:848.38px;top:394.00px;width:8.70px;height:9.00px;background:linear-gradient(#fafafa,#ececec);border:0.8px solid #d6d6d6;border-radius:1.6px;box-sizing:border-box"></div>
<svg style="left:850.18px;top:394.4px" width="7" height="6" viewBox="0 0 7 6"><polyline points="0.7,3.0 2.4,4.6 5.8,1.0" fill="none" stroke="#8c8c8c" stroke-width="1.3"/></svg>
<div style="left:861.45px;top:394.00px;width:8.70px;height:9.00px;background:linear-gradient(#fafafa,#ececec);border:0.8px solid #d6d6d6;border-radius:1.6px;box-sizing:border-box"></div>
<svg style="left:863.25px;top:394.4px" width="7" height="6" viewBox="0 0 7 6"><polyline points="0.7,3.0 2.4,4.6 5.8,1.0" fill="none" stroke="#8c8c8c" stroke-width="1.3"/></svg>
<div style="left:874.52px;top:394.00px;width:8.70px;height:9.00px;background:linear-gradient(#fafafa,#ececec);border:0.8px solid #d6d6d6;border-radius:1.6px;box-sizing:border-box"></div>
<svg style="left:876.32px;top:394.4px" width="7" height="6" viewBox="0 0 7 6"><polyline points="0.7,3.0 2.4,4.6 5.8,1.0" fill="none" stroke="#8c8c8c" stroke-width="1.3"/></svg>
<div style="left:887.59px;top:394.00px;width:8.70px;height:9.00px;background:linear-gradient(#fafafa,#ececec);border:0.8px solid #d6d6d6;border-radius:1.6px;box-sizing:border-box"></div>
<svg style="left:889.39px;top:394.4px" width="7" height="6" viewBox="0 0 7 6"><polyline points="0.7,3.0 2.4,4.6 5.8,1.0" fill="none" stroke="#8c8c8c" stroke-width="1.3"/></svg>
<span class="t" style="left:688.80px;top:396.78px;font-size:7.85px;line-height:10px;font-weight:700;color:#333;transform:scaleX(0.837);-webkit-text-stroke:0.15px #333;">Gate states</span>
<span class="t" style="left:688.80px;top:414.78px;font-size:7.85px;line-height:10px;font-weight:700;color:#333;transform:scaleX(0.854);-webkit-text-stroke:0.15px #333;">Cycle time (ns)</span>
<span class="t" style="left:688.80px;top:436.68px;font-size:7.85px;line-height:10px;font-weight:700;color:#333;transform:scaleX(0.860);-webkit-text-stroke:0.15px #333;">Cycle time extension (ns)</span>
<span class="t" style="left:688.80px;top:458.58px;font-size:7.85px;line-height:10px;font-weight:700;color:#333;transform:scaleX(0.834);-webkit-text-stroke:0.15px #333;">Base time seconds</span>
<span class="t" style="left:688.80px;top:480.48px;font-size:7.85px;line-height:10px;font-weight:700;color:#333;transform:scaleX(0.848);-webkit-text-stroke:0.15px #333;">Base time nanoseconds</span>
<span class="t" style="left:688.80px;top:502.38px;font-size:7.85px;line-height:10px;font-weight:700;color:#333;transform:scaleX(0.877);-webkit-text-stroke:0.15px #333;">Control list length</span>
<div style="left:794.10px;top:409.30px;width:105.00px;height:18.30px;background:#c6c6c6"></div>
<span class="t" style="left:824.20px;top:414.03px;font-size:8.43px;line-height:11px;font-weight:400;color:#555;transform:scaleX(0.785);">4294967000</span>
<svg style="left:890.8000000000001px;top:411.90000000000003px" width="7" height="13" viewBox="0 0 7 13"><rect x="0.3" y="0.3" width="6.2" height="5.6" rx="0.8" fill="#f6f6f6" stroke="#d8d8d8" stroke-width="0.5"/><rect x="0.3" y="6.8" width="6.2" height="5.6" rx="0.8" fill="#f6f6f6" stroke="#d8d8d8" stroke-width="0.5"/><polyline points="1.5,3.9 3.4,2.7 5.3,3.9" fill="none" stroke="#9a9a9a" stroke-width="0.9"/><polyline points="1.5,8.8 3.4,10.0 5.3,8.8" fill="none" stroke="#9a9a9a" stroke-width="0.9"/></svg>
<div style="left:794.10px;top:431.25px;width:105.00px;height:18.30px;background:#c6c6c6"></div>
<span class="t" style="left:824.20px;top:435.98px;font-size:8.43px;line-height:11px;font-weight:400;color:#555;transform:scaleX(0.785);">4294967295</span>
<svg style="left:890.8000000000001px;top:433.85px" width="7" height="13" viewBox="0 0 7 13"><rect x="0.3" y="0.3" width="6.2" height="5.6" rx="0.8" fill="#f6f6f6" stroke="#d8d8d8" stroke-width="0.5"/><rect x="0.3" y="6.8" width="6.2" height="5.6" rx="0.8" fill="#f6f6f6" stroke="#d8d8d8" stroke-width="0.5"/><polyline points="1.5,3.9 3.4,2.7 5.3,3.9" fill="none" stroke="#9a9a9a" stroke-width="0.9"/><polyline points="1.5,8.8 3.4,10.0 5.3,8.8" fill="none" stroke="#9a9a9a" stroke-width="0.9"/></svg>
<div style="left:794.10px;top:453.20px;width:105.00px;height:18.30px;background:#c6c6c6"></div>
<span class="t" style="left:840.76px;top:457.93px;font-size:8.43px;line-height:11px;font-weight:400;color:#555;transform:scaleX(0.785);">0</span>
<svg style="left:890.8000000000001px;top:455.8px" width="7" height="13" viewBox="0 0 7 13"><rect x="0.3" y="0.3" width="6.2" height="5.6" rx="0.8" fill="#f6f6f6" stroke="#d8d8d8" stroke-width="0.5"/><rect x="0.3" y="6.8" width="6.2" height="5.6" rx="0.8" fill="#f6f6f6" stroke="#d8d8d8" stroke-width="0.5"/><polyline points="1.5,3.9 3.4,2.7 5.3,3.9" fill="none" stroke="#9a9a9a" stroke-width="0.9"/><polyline points="1.5,8.8 3.4,10.0 5.3,8.8" fill="none" stroke="#9a9a9a" stroke-width="0.9"/></svg>
<div style="left:794.10px;top:475.15px;width:105.00px;height:18.30px;background:#c6c6c6"></div>
<span class="t" style="left:840.76px;top:479.88px;font-size:8.43px;line-height:11px;font-weight:400;color:#555;transform:scaleX(0.785);">0</span>
<svg style="left:890.8000000000001px;top:477.75px" width="7" height="13" viewBox="0 0 7 13"><rect x="0.3" y="0.3" width="6.2" height="5.6" rx="0.8" fill="#f6f6f6" stroke="#d8d8d8" stroke-width="0.5"/><rect x="0.3" y="6.8" width="6.2" height="5.6" rx="0.8" fill="#f6f6f6" stroke="#d8d8d8" stroke-width="0.5"/><polyline points="1.5,3.9 3.4,2.7 5.3,3.9" fill="none" stroke="#9a9a9a" stroke-width="0.9"/><polyline points="1.5,8.8 3.4,10.0 5.3,8.8" fill="none" stroke="#9a9a9a" stroke-width="0.9"/></svg>
<div style="left:794.10px;top:497.10px;width:105.00px;height:18.30px;background:#c6c6c6"></div>
<span class="t" style="left:840.76px;top:501.83px;font-size:8.43px;line-height:11px;font-weight:400;color:#555;transform:scaleX(0.785);">0</span>
<svg style="left:890.8000000000001px;top:499.70000000000005px" width="7" height="13" viewBox="0 0 7 13"><rect x="0.3" y="0.3" width="6.2" height="5.6" rx="0.8" fill="#f6f6f6" stroke="#d8d8d8" stroke-width="0.5"/><rect x="0.3" y="6.8" width="6.2" height="5.6" rx="0.8" fill="#f6f6f6" stroke="#d8d8d8" stroke-width="0.5"/><polyline points="1.5,3.9 3.4,2.7 5.3,3.9" fill="none" stroke="#9a9a9a" stroke-width="0.9"/><polyline points="1.5,8.8 3.4,10.0 5.3,8.8" fill="none" stroke="#9a9a9a" stroke-width="0.9"/></svg>
</body></html>
